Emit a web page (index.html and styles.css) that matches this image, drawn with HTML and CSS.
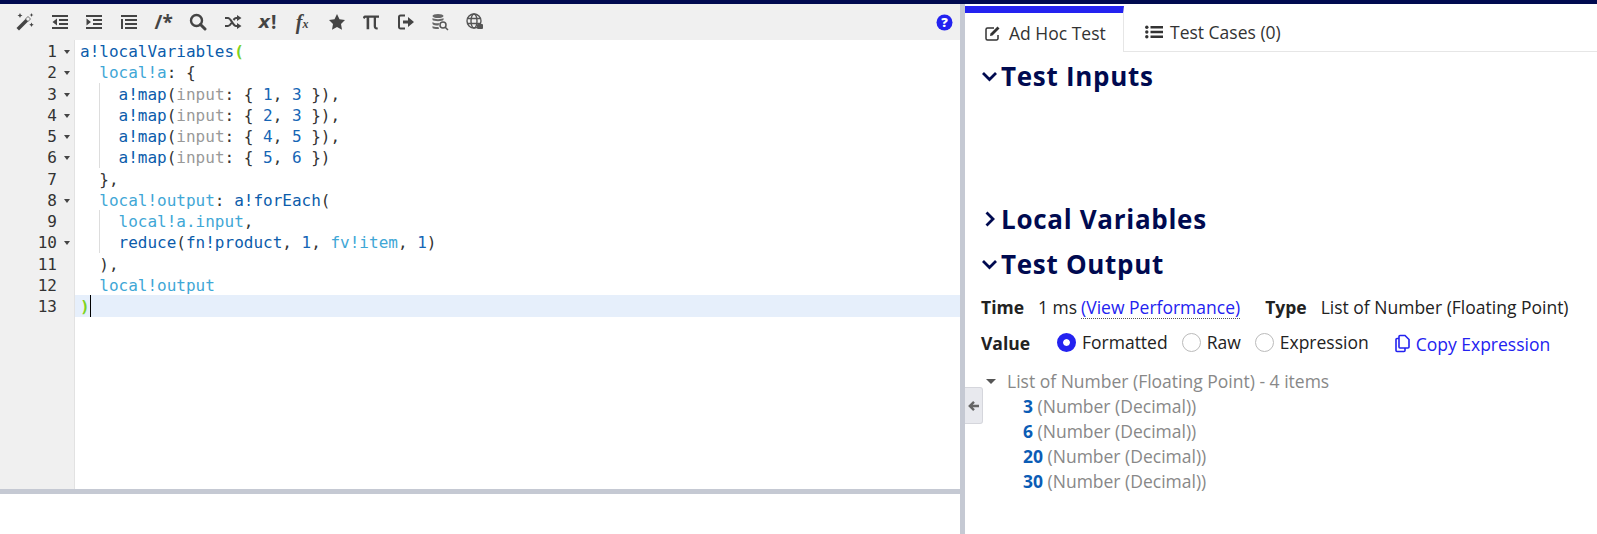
FILE: index.html
```html
<!DOCTYPE html>
<html lang="en">
<head>
    <meta charset="UTF-8">
    <title>Expression Editor</title>
    <link rel="stylesheet" href="styles.css">
</head>
<body>
    <div class="topbar"></div>
    <div class="main-container">
        <!-- Left: editor -->
        <div class="left-pane">
            <div class="toolbar">
                <span class="tool"><svg width="20" height="20" viewBox="0 0 20 20"><path d="M1.500 16 13 4.500 15.500 7 4 18.500z" fill="#444"/><path d="M13 4.500 15.500 7 13 9.500 10.500 7z" fill="#f0f0f0" stroke="#444" stroke-width=".6"/><path d="M5 1l.8 1.700 1.700.8-1.700.8L5 6l-.8-1.700-1.700-.8 1.700-.8zM16.500 1l.6 1.400 1.400.6-1.400.6-.6 1.400-.6-1.400-1.400-.6 1.400-.6zM16.500 10.500l.7 1.500 1.500.7-1.500.7-.7 1.500-.7-1.500-1.500-.7 1.500-.7z" fill="#444"/></svg></span>
                <span class="tool"><svg width="18" height="18" viewBox="0 0 18 18"><path d="M1 2h16v2H1zM8 6h9v2H8zM8 10h9v2H8zM1 14h16v2H1zM6 5.500v7L1.500 9z" fill="#444"/></svg></span>
                <span class="tool"><svg width="18" height="18" viewBox="0 0 18 18"><path d="M1 2h16v2H1zM8 6h9v2H8zM8 10h9v2H8zM1 14h16v2H1zM1.500 5.500v7L6 9z" fill="#444"/></svg></span>
                <span class="tool"><svg width="18" height="18" viewBox="0 0 18 18"><path d="M1 2h16v2H1zM5 6h12v2H5zM5 10h12v2H5zM5 14h12v2H5zM1 6h2v10H1z" fill="#444"/></svg></span>
                <span class="tool tool-text">/*</span>
                <span class="tool"><svg width="18" height="18" viewBox="0 0 18 18"><circle cx="7.500" cy="7.500" r="5.500" fill="none" stroke="#444" stroke-width="2.400"/><path d="M11.500 11.500 16 16" stroke="#444" stroke-width="3" stroke-linecap="round"/></svg></span>
                <span class="tool"><svg width="18" height="18" viewBox="0 0 18 18"><path d="M1 5h3c3 0 5 8 8 8h1.500M1 13h3c1.500 0 2.500-1.500 3.500-3M9.500 7c1-1.200 1.500-2 2.500-2h1.500" fill="none" stroke="#444" stroke-width="2.200"/><path d="M13 2l4.500 3L13 8zM13 10l4.500 3L13 16z" fill="#444"/></svg></span>
                <span class="tool tool-text tool-xmark"><em>x</em>!</span>
                <span class="tool tool-text tool-fx">f<small>x</small></span>
                <span class="tool"><svg width="18" height="18" viewBox="0 0 18 18"><path d="M9 1l2.500 5.300 5.500.8-4 4 1 5.700L9 14.100l-5 2.700 1-5.700-4-4 5.500-.8z" fill="#444"/></svg></span>
                <span class="tool"><svg width="18" height="18" viewBox="0 0 18 18"><path d="M1 5c0-2 1-2.500 3-2.500h13v2.300h-3V13c0 1 .4 1.600 1.800 1.600l-.2 1.900c-2.700.3-3.900-1.200-3.900-3.200V4.800H7.200V16.300H4.600V4.800C3 4.800 2.800 5.200 2.800 6z" fill="#444"/></svg></span>
                <span class="tool"><svg width="18" height="18" viewBox="0 0 18 18"><path d="M8 2.500H3.500a1.500 1.500 0 0 0-1.500 1.500v10a1.500 1.500 0 0 0 1.500 1.500H8" fill="none" stroke="#444" stroke-width="2"/><path d="M6 7.500h5V4l6 5-6 5v-3.500H6z" fill="#444"/></svg></span>
                <span class="tool"><svg width="18" height="18" viewBox="0 0 18 18"><ellipse cx="7" cy="3" rx="5.500" ry="2" fill="#666"/><path d="M1.500 5c1 1.500 10 1.500 11 0v2c-1 1.500-10 1.500-11 0zM1.500 9c1 1.500 6 1.500 7 1l-1 2.500c-2.500 0-5.500-.5-6-1.500zM1.500 13c1 1 4 1.200 6 1l.5 2c-3 .2-6-.3-6.500-1z" fill="#666"/><circle cx="12" cy="12" r="3" fill="none" stroke="#555" stroke-width="1.500"/><path d="M14 14l3 3" stroke="#555" stroke-width="1.500"/></svg></span>
                <span class="tool"><svg width="18" height="18" viewBox="0 0 18 18"><g fill="none" stroke="#555" stroke-width="1.400"><circle cx="8" cy="8" r="7"/><ellipse cx="8" cy="8" rx="3" ry="7"/><path d="M1 5.500h14M1 10.500h14"/></g><rect x="11" y="11" width="6" height="5" rx="1" fill="#555"/></svg></span>
                <span class="tool-spacer"></span>
                <svg class="help" width="17" height="17" viewBox="0 0 17 17"><circle cx="8.500" cy="8.500" r="8" fill="#2322f0"/><text x="8.500" y="13" text-anchor="middle" class="help-mark">?</text></svg>
            </div>
            <div class="editor">
                <div class="gutter">
                    <div class="num">1<i class="fold"></i></div>
                    <div class="num">2<i class="fold"></i></div>
                    <div class="num">3<i class="fold"></i></div>
                    <div class="num">4<i class="fold"></i></div>
                    <div class="num">5<i class="fold"></i></div>
                    <div class="num">6<i class="fold"></i></div>
                    <div class="num">7<i class="nofold"></i></div>
                    <div class="num">8<i class="fold"></i></div>
                    <div class="num">9<i class="nofold"></i></div>
                    <div class="num">10<i class="fold"></i></div>
                    <div class="num">11<i class="nofold"></i></div>
                    <div class="num">12<i class="nofold"></i></div>
                    <div class="num">13<i class="nofold"></i></div>
                </div>
                <div class="code">
                    <div class="line"><span class="fn">a!localVariables</span><span class="bracket">(</span></div>
                    <div class="line"><span class="ind"></span><span class="var">local!a</span>: {</div>
                    <div class="line"><span class="ind"></span><span class="ind guide"></span><span class="fn">a!map</span>(<span class="kw">input</span>: { <span class="n">1</span>, <span class="n">3</span> }),</div>
                    <div class="line"><span class="ind"></span><span class="ind guide"></span><span class="fn">a!map</span>(<span class="kw">input</span>: { <span class="n">2</span>, <span class="n">3</span> }),</div>
                    <div class="line"><span class="ind"></span><span class="ind guide"></span><span class="fn">a!map</span>(<span class="kw">input</span>: { <span class="n">4</span>, <span class="n">5</span> }),</div>
                    <div class="line"><span class="ind"></span><span class="ind guide"></span><span class="fn">a!map</span>(<span class="kw">input</span>: { <span class="n">5</span>, <span class="n">6</span> })</div>
                    <div class="line"><span class="ind"></span>},</div>
                    <div class="line"><span class="ind"></span><span class="var">local!output</span>: <span class="fn">a!forEach</span>(</div>
                    <div class="line"><span class="ind"></span><span class="ind guide"></span><span class="var">local!a.input</span>,</div>
                    <div class="line"><span class="ind"></span><span class="ind guide"></span><span class="fn">reduce</span>(<span class="fn">fn!product</span>, <span class="n">1</span>, <span class="var">fv!item</span>, <span class="n">1</span>)</div>
                    <div class="line"><span class="ind"></span>),</div>
                    <div class="line"><span class="ind"></span><span class="var">local!output</span></div>
                    <div class="line line-active"><span class="bracket">)</span><span class="cursor"></span></div>
                </div>
            </div>
            <div class="hsplit"></div>
            <div class="bottom-blank"></div>
        </div>

        <div class="vsplit"></div>

        <!-- Right: test panel -->
        <div class="right-pane">
            <button class="collapse"><svg width="12" height="12" viewBox="0 0 12 12"><path d="M11 6H2.500M6 1.800 1.800 6 6 10.200" fill="none" stroke="#666" stroke-width="2.400"/></svg></button>
            <div class="tabs">
                <div class="tab tab-active">
                    <svg width="18" height="18" viewBox="0 0 18 18"><path d="M14 11v3.500a1.500 1.500 0 0 1-1.500 1.500h-9A1.500 1.500 0 0 1 2 14.500v-9A1.500 1.500 0 0 1 3.500 4H10" fill="none" stroke="#333" stroke-width="1.500"/><path d="M6.500 9.500 13.500 2.500l2 2-7 7-2.500.5z" fill="#333"/></svg>
                    Ad Hoc Test
                </div>
                <div class="tab">
                    <svg width="18" height="18" viewBox="0 0 18 18"><path d="M5.500 3H18v2.500H5.500zM5.500 7.800H18v2.500H5.500zM5.500 12.500H18V15H5.500z" fill="#333"/><circle cx="1.800" cy="4.200" r="1.700" fill="#333"/><circle cx="1.800" cy="9" r="1.700" fill="#333"/><circle cx="1.800" cy="13.800" r="1.700" fill="#333"/></svg>
                    Test Cases (0)
                </div>
            </div>
            <div class="panel">
                <h2 class="section section-inputs"><svg class="chev" width="17" height="12" viewBox="0 0 16 12"><path d="M1.500 3l6.500 6.500L14.500 3" fill="none" stroke="#000a50" stroke-width="2.800"/></svg>Test Inputs</h2>
                <h2 class="section section-locals"><svg class="chev" width="17" height="16" viewBox="0 0 16 16"><path d="M5 1.500l6.500 6.500L5 14.500" fill="none" stroke="#000a50" stroke-width="2.800"/></svg>Local Variables</h2>
                <h2 class="section section-output"><svg class="chev" width="17" height="12" viewBox="0 0 16 12"><path d="M1.500 3l6.500 6.500L14.500 3" fill="none" stroke="#000a50" stroke-width="2.800"/></svg>Test Output</h2>

                <div class="meta-row">
                    <b class="label">Time</b>
                    <span class="time">1 ms</span>
                    <a class="perf-link">(View Performance)</a>
                    <b class="label type-label">Type</b>
                    <span>List of Number (Floating Point)</span>
                </div>
                <div class="value-row">
                    <b class="label value-label">Value</b>
                    <span class="radio radio-on"></span><span class="radio-text">Formatted</span>
                    <span class="radio"></span><span class="radio-text">Raw</span>
                    <span class="radio"></span><span class="radio-text">Expression</span>
                    <a class="copy-link"><svg width="17" height="19" viewBox="0 0 17 19"><path d="M6 1.500h5l4 4V13a1 1 0 0 1-1 1H6a1 1 0 0 1-1-1V2.500a1 1 0 0 1 1-1z" fill="none" stroke="#2322f0" stroke-width="1.600"/><path d="M5 4.500H3a1 1 0 0 0-1 1V16.500a1 1 0 0 0 1 1h7a1 1 0 0 0 1-1V14" fill="none" stroke="#2322f0" stroke-width="1.600"/></svg>Copy Expression</a>
                </div>

                <div class="result">
                    <div class="result-head"><i class="caret"></i>List of Number (Floating Point) - 4 items</div>
                    <div class="result-item"><b>3</b> (Number (Decimal))</div>
                    <div class="result-item"><b>6</b> (Number (Decimal))</div>
                    <div class="result-item"><b>20</b> (Number (Decimal))</div>
                    <div class="result-item"><b>30</b> (Number (Decimal))</div>
                </div>
            </div>
        </div>
    </div>
</body>
</html>
```

FILE: styles.css
```css
* {
    margin: 0;
    padding: 0;
    box-sizing: border-box;
}

body {
    font-family: "Open Sans", sans-serif;
    font-size: 17.5px;
    color: #222;
    background-color: white;
    height: 534px;
    overflow: hidden;
}

.topbar {
    height: 4px;
    background-color: #000a50;
}

.main-container {
    display: flex;
    height: 530px;
}

/* Left pane */
.left-pane {
    width: 960px;
    display: flex;
    flex-direction: column;
}

.toolbar {
    height: 36px;
    background-color: #f0f0f0;
    display: flex;
    align-items: center;
    padding-left: 8px;
    padding-right: 7px;
}

.tool {
    width: 34.6px;
    display: flex;
    justify-content: center;
    align-items: center;
    color: #444;
}

.tool-text {
    font-family: "Open Sans", sans-serif;
    font-weight: 700;
    font-size: 19px;
    line-height: 18px;
}

.tool-xmark em {
    font-family: "DejaVu Sans", sans-serif;
    font-size: 18px;
    margin-right: 1px;
}

.tool-fx {
    font-family: "Liberation Serif", serif;
    font-style: italic;
    font-size: 20px;
}

.tool-fx small {
    font-size: 12px;
    padding-top: 4px;
}

.tool-spacer {
    flex-grow: 1;
}

.help-mark {
    font-family: "Open Sans", sans-serif;
    font-weight: 800;
    font-size: 13px;
    fill: white;
}

.editor {
    height: 449px;
    display: flex;
    background-color: white;
}

.gutter {
    width: 75px;
    background-color: #f0f0f0;
    border-right: 1px solid #e2e2e2;
}

.num {
    height: 21.25px;
    line-height: 24px;
    display: flex;
    justify-content: flex-end;
    padding-right: 1px;
    font-family: "DejaVu Sans Mono", monospace;
    font-size: 16px;
    color: #333;
}

.fold {
    width: 13px;
    height: 0;
    margin-left: 3px;
    position: relative;
}

.fold::after {
    content: "";
    position: absolute;
    left: 4px;
    top: 10px;
    border-left: 3px solid transparent;
    border-right: 3px solid transparent;
    border-top: 4px solid #444;
}

.nofold {
    width: 13px;
    margin-left: 3px;
}

.code {
    flex-grow: 1;
    font-family: "DejaVu Sans Mono", monospace;
    font-size: 16px;
    color: #333;
}

.line {
    height: 21.25px;
    line-height: 24px;
    padding-left: 5px;
    white-space: pre;
}

.line-active {
    height: 22px;
    background-color: #e6effb;
}

.ind {
    display: inline-block;
    width: 2ch;
    height: 21.25px;
    vertical-align: top;
}

.guide {
    border-left: 1px solid #ddd;
}

.fn {
    color: #0b5cab;
}

.var {
    color: #3fa7d6;
}

.kw {
    color: #999;
}

.n {
    color: #1565b5;
}

.bracket {
    color: #7ed321;
    font-weight: 700;
}

.cursor {
    display: inline-block;
    width: 1px;
    height: 22px;
    background-color: black;
    vertical-align: top;
}

.hsplit {
    height: 5px;
    background-color: #c5c9d3;
}

.bottom-blank {
    flex-grow: 1;
}

.vsplit {
    width: 5px;
    background-color: #c5c9d3;
}

/* Right pane */
.right-pane {
    flex-grow: 1;
    position: relative;
}

.collapse {
    position: absolute;
    left: 0;
    top: 383px;
    width: 18px;
    height: 37px;
    background-color: #e8e9ee;
    border: 1px solid #d5d6dc;
    border-left: none;
    border-radius: 0 3px 3px 0;
    display: flex;
    align-items: center;
    justify-content: center;
}

.tabs {
    height: 46px;
    margin-top: 2px;
    display: flex;
    border-bottom: 1px solid #e6e6e6;
}

.tab {
    display: flex;
    align-items: center;
    gap: 7px;
    padding: 7px 21px 0;
    color: #333;
    white-space: nowrap;
}

.tab-active {
    width: 159px;
    padding-left: 19px;
    padding-right: 0;
    padding-top: 0;
    border-top: 7px solid #2322f0;
    border-right: 1px solid #e6e6e6;
    background-color: white;
    height: 46px;
    margin-bottom: -1px;
}

.panel {
    padding-left: 16px;
}

.section {
    display: flex;
    align-items: center;
    font-size: 26px;
    line-height: 32px;
    letter-spacing: 0.7px;
    font-weight: 700;
    color: #000a50;
}

.chev {
    margin-right: 3px;
    flex-shrink: 0;
}

.section-inputs {
    margin-top: 8px;
}

.section-locals {
    margin-top: 111px;
}

.section-output {
    margin-top: 13px;
}

.meta-row {
    display: flex;
    margin-top: 15px;
    line-height: 24px;
    white-space: nowrap;
}

.label {
    font-weight: 700;
}

.time {
    margin-left: 14px;
    margin-right: 4px;
}

.perf-link {
    color: #2322f0;
    border-bottom: 1px dotted #555;
    height: 24px;
}

.type-label {
    margin-left: 25px;
    margin-right: 14px;
}

.value-row {
    display: flex;
    align-items: center;
    margin-top: 11px;
    height: 24px;
    white-space: nowrap;
}

.value-label {
    width: 76px;
    padding-top: 2px;
}

.radio {
    width: 19px;
    height: 19px;
    border: 1px solid #bbb;
    border-radius: 50%;
    margin-right: 6px;
    background-color: white;
}

.radio-on {
    background-color: #2322f0;
    border: 6px solid #2322f0;
    box-shadow: inset 0 0 0 4px white;
}

.radio-text {
    margin-right: 14px;
}

.copy-link {
    display: flex;
    align-items: center;
    gap: 5px;
    margin-left: 11px;
    padding-top: 3px;
    color: #2322f0;
}

.result {
    margin-top: 14px;
    color: #888;
}

.result-head {
    display: flex;
    align-items: center;
    height: 26px;
    padding-left: 5px;
}

.caret {
    border-left: 5px solid transparent;
    border-right: 5px solid transparent;
    border-top: 5px solid #555;
    margin-right: 11px;
}

.result-item {
    height: 25px;
    line-height: 25px;
    padding-left: 42px;
}

.result-item b {
    color: #0b5cb5;
}
```
